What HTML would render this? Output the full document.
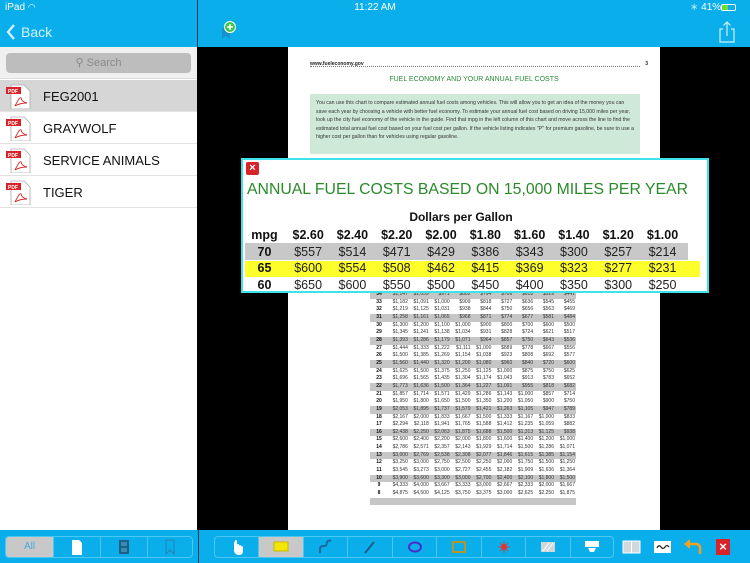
<!DOCTYPE html>
<html><head><meta charset="utf-8">
<style>
*{margin:0;padding:0;box-sizing:border-box}
body{width:750px;height:563px;overflow:hidden;position:relative;font-family:"Liberation Sans",Arial,sans-serif;background:#000}
.abs{position:absolute}
.blue{background:#0aaeea}
.row{position:absolute;left:0;width:197px;height:32px;border-bottom:1px solid #e2e2e2;background:#fff}
.row span{position:absolute;left:43px;top:9px;font-size:13px;color:#111}
.pdf{position:absolute;left:6px;top:4px;width:25px;height:25px}
table.small{position:absolute;left:370px;top:291px;width:206px;border-collapse:collapse;font-size:5px;color:#333;table-layout:fixed}
table.small td{height:7.65px;line-height:7.65px;text-align:right;padding:0 1px;white-space:nowrap;overflow:hidden}
table.small td:first-child{text-align:center;font-weight:bold;width:18px;color:#111}
table.small tr.s{background:#c6c6c6}
.pop td{text-align:center;font-size:12.5px;color:#222;height:16.5px;padding:0;white-space:nowrap}
.pop td.b{font-weight:bold;color:#111}
.seg{position:absolute;top:536px;height:22px;border:1px solid #4cc6f2;border-radius:4px}
.seg div{position:absolute;top:0;height:20px;border-right:1px solid #4cc6f2}
</style></head><body>
<div class="abs blue" style="left:0;top:0;width:750px;height:47px"></div>
<div class="abs" style="left:197px;top:0;width:1px;height:47px;background:#0b3a52"></div>
<div class="abs" style="left:5px;top:2px;font-size:10px;color:#fff">iPad <span style="font-size:9px">◠</span></div>
<div class="abs" style="left:0;top:2px;width:750px;text-align:center;font-size:10px;color:#fff">11:22 AM</div>
<div class="abs" style="left:690px;top:2px;font-size:10px;color:#fff"><span style="opacity:.7">∗</span> 41%</div>
<div class="abs" style="left:721px;top:4px;width:15px;height:7px;border:1px solid #fff;border-radius:2px"><div style="width:6px;height:5px;background:#6ddc3a"></div></div>
<svg class="abs" style="left:6px;top:23px" width="60" height="18"><polyline points="8,2 2,9 8,16" fill="none" stroke="#d6f2fc" stroke-width="2.2"/><text x="15" y="14" font-size="14" fill="#d6f2fc" font-family="Liberation Sans">Back</text></svg>
<svg class="abs" style="left:219px;top:20px" width="20" height="20"><path d="M3 8 h8 v11 l-4 -3 l-4 3z" fill="#1592cc"/><circle cx="11" cy="7" r="5.5" fill="#3fc64a" stroke="#fff" stroke-width="1"/><path d="M11 4v6M8 7h6" stroke="#fff" stroke-width="1.6"/></svg>
<svg class="abs" style="left:719px;top:21px" width="18" height="22"><path d="M4 8 H1 V21 H15 V8 H12 M8 15 V1 M4.5 4.5 L8 1 L11.5 4.5" fill="none" stroke="#cdeffb" stroke-width="1.2"/></svg>

<div class="abs" style="left:0;top:47px;width:197px;height:483px;background:#fff"></div>
<div class="abs" style="left:0;top:47px;width:197px;height:32px;background:#f0f0f0;border-bottom:1px solid #ddd"></div>
<div class="abs" style="left:6px;top:53px;width:185px;height:20px;background:#bdbdbd;border-radius:4px;text-align:center;font-size:11px;color:#8a8a8a;line-height:20px">⚲ Search</div>
<div class="row" style="top:80px;background:#d6d6d6"><svg class="pdf"><use href="#pdfi"/></svg><span>FEG2001</span></div>
<div class="row" style="top:112px"><svg class="pdf"><use href="#pdfi"/></svg><span>GRAYWOLF</span></div>
<div class="row" style="top:144px"><svg class="pdf"><use href="#pdfi"/></svg><span>SERVICE ANIMALS</span></div>
<div class="row" style="top:176px"><svg class="pdf"><use href="#pdfi"/></svg><span>TIGER</span></div>
<svg width="0" height="0" style="position:absolute"><defs><g id="pdfi"><path d="M5 1 H18 L24 7 V25 H5z" fill="#fff" stroke="#aaa" stroke-width=".8"/><rect x="0" y="3" width="15" height="7" fill="#d8232a"/><text x="2" y="9" font-size="5" fill="#fff" font-family="Liberation Sans" font-weight="bold">PDF</text><path d="M9 22 Q14 12 15 14 Q16 18 21 19 Q14 19 9 22" fill="none" stroke="#d8232a" stroke-width=".9"/></g></defs></svg>
<div class="abs" style="left:197px;top:47px;width:1px;height:483px;background:#000"></div>

<div class="abs" style="left:288px;top:47px;width:372px;height:483px;background:#fff"></div>
<div class="abs" style="left:310px;top:61px;width:330px;font-size:5px;font-weight:bold;color:#222;border-bottom:1px dotted #777;height:6px">www.fueleconomy.gov<span style="position:absolute;right:-8px">3</span></div>
<div class="abs" style="left:288px;top:76px;width:372px;text-align:center;font-size:7px;color:#2a8a3a">FUEL ECONOMY AND YOUR ANNUAL FUEL COSTS</div>
<div class="abs" style="left:310px;top:94px;width:330px;height:60px;background:#cfe9d8;padding:5px 6px;font-size:5.2px;line-height:8.5px;color:#333">You can use this chart to compare estimated annual fuel costs among vehicles. This will allow you to get an idea of the money you can save each year by choosing a vehicle with better fuel economy. To estimate your annual fuel cost based on driving 15,000 miles per year, look up the city fuel economy of the vehicle in the guide. Find that mpg in the left column of this chart and move across the line to find the estimated total annual fuel cost based on your fuel cost per gallon. If the vehicle listing indicates "P" for premium gasoline, be sure to use a higher cost per gallon than for vehicles using regular gasoline.</div>

<table class="small">
<tr class="s"><td>34</td><td>$1,147</td><td>$1,059</td><td>$971</td><td>$882</td><td>$794</td><td>$706</td><td>$618</td><td>$529</td><td>$441</td></tr>
<tr><td>33</td><td>$1,182</td><td>$1,091</td><td>$1,000</td><td>$909</td><td>$818</td><td>$727</td><td>$636</td><td>$545</td><td>$455</td></tr>
<tr><td>32</td><td>$1,219</td><td>$1,125</td><td>$1,031</td><td>$938</td><td>$844</td><td>$750</td><td>$656</td><td>$563</td><td>$469</td></tr>
<tr class="s"><td>31</td><td>$1,258</td><td>$1,161</td><td>$1,065</td><td>$968</td><td>$871</td><td>$774</td><td>$677</td><td>$581</td><td>$484</td></tr>
<tr><td>30</td><td>$1,300</td><td>$1,200</td><td>$1,100</td><td>$1,000</td><td>$900</td><td>$800</td><td>$700</td><td>$600</td><td>$500</td></tr>
<tr><td>29</td><td>$1,345</td><td>$1,241</td><td>$1,138</td><td>$1,034</td><td>$931</td><td>$828</td><td>$724</td><td>$621</td><td>$517</td></tr>
<tr class="s"><td>28</td><td>$1,393</td><td>$1,286</td><td>$1,179</td><td>$1,071</td><td>$964</td><td>$857</td><td>$750</td><td>$643</td><td>$536</td></tr>
<tr><td>27</td><td>$1,444</td><td>$1,333</td><td>$1,222</td><td>$1,111</td><td>$1,000</td><td>$889</td><td>$778</td><td>$667</td><td>$556</td></tr>
<tr><td>26</td><td>$1,500</td><td>$1,385</td><td>$1,269</td><td>$1,154</td><td>$1,038</td><td>$923</td><td>$808</td><td>$692</td><td>$577</td></tr>
<tr class="s"><td>25</td><td>$1,560</td><td>$1,440</td><td>$1,320</td><td>$1,200</td><td>$1,080</td><td>$960</td><td>$840</td><td>$720</td><td>$600</td></tr>
<tr><td>24</td><td>$1,625</td><td>$1,500</td><td>$1,375</td><td>$1,250</td><td>$1,125</td><td>$1,000</td><td>$875</td><td>$750</td><td>$625</td></tr>
<tr><td>23</td><td>$1,696</td><td>$1,565</td><td>$1,435</td><td>$1,304</td><td>$1,174</td><td>$1,043</td><td>$913</td><td>$783</td><td>$652</td></tr>
<tr class="s"><td>22</td><td>$1,773</td><td>$1,636</td><td>$1,500</td><td>$1,364</td><td>$1,227</td><td>$1,091</td><td>$955</td><td>$818</td><td>$682</td></tr>
<tr><td>21</td><td>$1,857</td><td>$1,714</td><td>$1,571</td><td>$1,429</td><td>$1,286</td><td>$1,143</td><td>$1,000</td><td>$857</td><td>$714</td></tr>
<tr><td>20</td><td>$1,950</td><td>$1,800</td><td>$1,650</td><td>$1,500</td><td>$1,350</td><td>$1,200</td><td>$1,050</td><td>$900</td><td>$750</td></tr>
<tr class="s"><td>19</td><td>$2,053</td><td>$1,895</td><td>$1,737</td><td>$1,579</td><td>$1,421</td><td>$1,263</td><td>$1,105</td><td>$947</td><td>$789</td></tr>
<tr><td>18</td><td>$2,167</td><td>$2,000</td><td>$1,833</td><td>$1,667</td><td>$1,500</td><td>$1,333</td><td>$1,167</td><td>$1,000</td><td>$833</td></tr>
<tr><td>17</td><td>$2,294</td><td>$2,118</td><td>$1,941</td><td>$1,765</td><td>$1,588</td><td>$1,412</td><td>$1,235</td><td>$1,059</td><td>$882</td></tr>
<tr class="s"><td>16</td><td>$2,438</td><td>$2,250</td><td>$2,063</td><td>$1,875</td><td>$1,688</td><td>$1,500</td><td>$1,313</td><td>$1,125</td><td>$938</td></tr>
<tr><td>15</td><td>$2,600</td><td>$2,400</td><td>$2,200</td><td>$2,000</td><td>$1,800</td><td>$1,600</td><td>$1,400</td><td>$1,200</td><td>$1,000</td></tr>
<tr><td>14</td><td>$2,786</td><td>$2,571</td><td>$2,357</td><td>$2,143</td><td>$1,929</td><td>$1,714</td><td>$1,500</td><td>$1,286</td><td>$1,071</td></tr>
<tr class="s"><td>13</td><td>$3,000</td><td>$2,769</td><td>$2,538</td><td>$2,308</td><td>$2,077</td><td>$1,846</td><td>$1,615</td><td>$1,385</td><td>$1,154</td></tr>
<tr><td>12</td><td>$3,250</td><td>$3,000</td><td>$2,750</td><td>$2,500</td><td>$2,250</td><td>$2,000</td><td>$1,750</td><td>$1,500</td><td>$1,250</td></tr>
<tr><td>11</td><td>$3,545</td><td>$3,273</td><td>$3,000</td><td>$2,727</td><td>$2,455</td><td>$2,182</td><td>$1,909</td><td>$1,636</td><td>$1,364</td></tr>
<tr class="s"><td>10</td><td>$3,900</td><td>$3,600</td><td>$3,300</td><td>$3,000</td><td>$2,700</td><td>$2,400</td><td>$2,100</td><td>$1,800</td><td>$1,500</td></tr>
<tr><td>9</td><td>$4,333</td><td>$4,000</td><td>$3,667</td><td>$3,333</td><td>$3,000</td><td>$2,667</td><td>$2,333</td><td>$2,000</td><td>$1,667</td></tr>
<tr><td>8</td><td>$4,875</td><td>$4,500</td><td>$4,125</td><td>$3,750</td><td>$3,375</td><td>$3,000</td><td>$2,625</td><td>$2,250</td><td>$1,875</td></tr>
<tr class="s"><td></td><td></td><td></td><td></td><td></td><td></td><td></td><td></td><td></td><td></td></tr>
</table>

<div class="abs" style="left:241px;top:158px;width:468px;height:135px;background:#fff;border:2px solid #3ee2ea"></div>
<div class="abs" style="left:246px;top:162px;width:13px;height:13px;background:#d8232a;border-radius:2px;color:#fff;font-size:11px;font-weight:bold;text-align:center;line-height:13px">×</div>
<div class="abs" style="left:247px;top:181px;font-size:15.8px;color:#2a8a2a;white-space:nowrap">ANNUAL FUEL COSTS BASED ON 15,000 MILES PER YEAR</div>
<div class="abs" style="left:245px;top:243px;width:443px;height:17px;background:#c8c8c8"></div>
<div class="abs" style="left:245px;top:261px;width:455px;height:16px;background:#fefe2a"></div>
<div class="abs" style="left:290px;top:210px;width:342px;text-align:center;font-size:12px;font-weight:bold;color:#111">Dollars per Gallon</div>
<table class="abs pop" style="left:243px;top:227px;border-collapse:collapse;table-layout:fixed">
<colgroup><col style="width:43px"><col span="9" style="width:44.3px"></colgroup>
<tr><td class="b">mpg</td><td class="b">$2.60</td><td class="b">$2.40</td><td class="b">$2.20</td><td class="b">$2.00</td><td class="b">$1.80</td><td class="b">$1.60</td><td class="b">$1.40</td><td class="b">$1.20</td><td class="b">$1.00</td></tr>
<tr><td class="b">70</td><td>$557</td><td>$514</td><td>$471</td><td>$429</td><td>$386</td><td>$343</td><td>$300</td><td>$257</td><td>$214</td></tr>
<tr><td class="b">65</td><td>$600</td><td>$554</td><td>$508</td><td>$462</td><td>$415</td><td>$369</td><td>$323</td><td>$277</td><td>$231</td></tr>
<tr><td class="b">60</td><td>$650</td><td>$600</td><td>$550</td><td>$500</td><td>$450</td><td>$400</td><td>$350</td><td>$300</td><td>$250</td></tr>
</table>

<div class="abs blue" style="left:0;top:530px;width:750px;height:33px"></div>
<div class="abs" style="left:198px;top:530px;width:1px;height:33px;background:#0b3a52"></div>
<div class="seg" style="left:5px;width:188px">
 <div style="left:0;width:48px;background:#c8c8c8;border-radius:3px 0 0 3px;color:#4aa8dc;font-size:10px;text-align:center;line-height:20px">All</div>
 <div style="left:48px;width:47px"><svg width="46" height="20"><path d="M18 3h7l3 3v12h-10z" fill="#fff"/></svg></div>
 <div style="left:95px;width:47px"><svg width="46" height="20"><rect x="18" y="3" width="10" height="14" fill="#1a5f86"/><rect x="20" y="5" width="6" height="4" fill="#3c8ab4"/><rect x="20" y="11" width="6" height="4" fill="#3c8ab4"/></svg></div>
 <div style="left:142px;width:45px;border:none"><svg width="44" height="20"><path d="M18 3h8v14l-4-4l-4 4z" fill="none" stroke="#2480b0"/></svg></div>
</div>
<div class="seg" style="left:214px;width:400px">
 <div style="left:0;width:44px"><svg width="44" height="20"><path d="M19 6v8q1 4 5 4q4 0 4-4v-4q0-1-1-1t-1 1v-1q0-1-1-1t-1 1v-1q0-1-1-1t-1 1v-4q0-1-1-1t-1 1z" fill="#fff"/></svg></div>
 <div style="left:44px;width:45px;background:#c8c8c8"><svg width="44" height="20"><rect x="15" y="5" width="14" height="9" fill="#f5e600" stroke="#c8b800"/></svg></div>
 <div style="left:89px;width:44px"><svg width="44" height="20"><path d="M16 16v-4q0-3 4-3q3 0 3-4q1-2 4-1" fill="none" stroke="#1a6a9a" stroke-width="2"/></svg></div>
 <div style="left:133px;width:45px"><svg width="44" height="20"><path d="M17 16l9-11" stroke="#1a5f86" stroke-width="2"/></svg></div>
 <div style="left:178px;width:44px"><svg width="44" height="20"><ellipse cx="22" cy="10" rx="6" ry="4.5" fill="none" stroke="#4a2ec8" stroke-width="2"/></svg></div>
 <div style="left:222px;width:45px"><svg width="44" height="20"><rect x="16" y="5" width="12" height="10" fill="none" stroke="#b8922a" stroke-width="2"/></svg></div>
 <div style="left:267px;width:44px"><svg width="44" height="20"><circle cx="22" cy="10" r="3" fill="#e8302a"/><path d="M22 4v12M16 10h12M18 6l8 8M26 6l-8 8" stroke="#e8302a" stroke-width=".8"/></svg></div>
 <div style="left:311px;width:45px"><svg width="44" height="20"><rect x="15" y="5" width="14" height="10" fill="#d0d8dc"/><path d="M17 14l6-8M21 14l6-8" stroke="#fff"/></svg></div>
 <div style="left:356px;width:43px;border:none"><svg width="42" height="20"><rect x="14" y="4" width="14" height="6" fill="#fff"/><path d="M17 11h8l-2 4h-4z" fill="#fff"/></svg></div>
</div>
<svg class="abs" style="left:622px;top:538px" width="20" height="18"><rect x="1" y="3" width="17" height="12" fill="#d0d8dc" stroke="#fff"/><path d="M9.5 3v12" stroke="#fff"/></svg>
<svg class="abs" style="left:653px;top:538px" width="20" height="18"><rect x="1" y="3" width="17" height="12" fill="#fff"/><path d="M4 10q2-4 4-1q2 3 4 0q2-3 4 0" fill="none" stroke="#222" stroke-width="1.2"/></svg>
<svg class="abs" style="left:683px;top:537px" width="20" height="20"><path d="M5 7h8q4 0 4 5v5" fill="none" stroke="#f4a21e" stroke-width="2.5"/><path d="M1 7l6-5v10z" fill="#f4a21e"/></svg>
<div class="abs" style="left:716px;top:539px;width:14px;height:16px;background:#d8232a;color:#fff;font-size:13px;font-weight:bold;text-align:center;line-height:16px">×</div>
</body></html>
